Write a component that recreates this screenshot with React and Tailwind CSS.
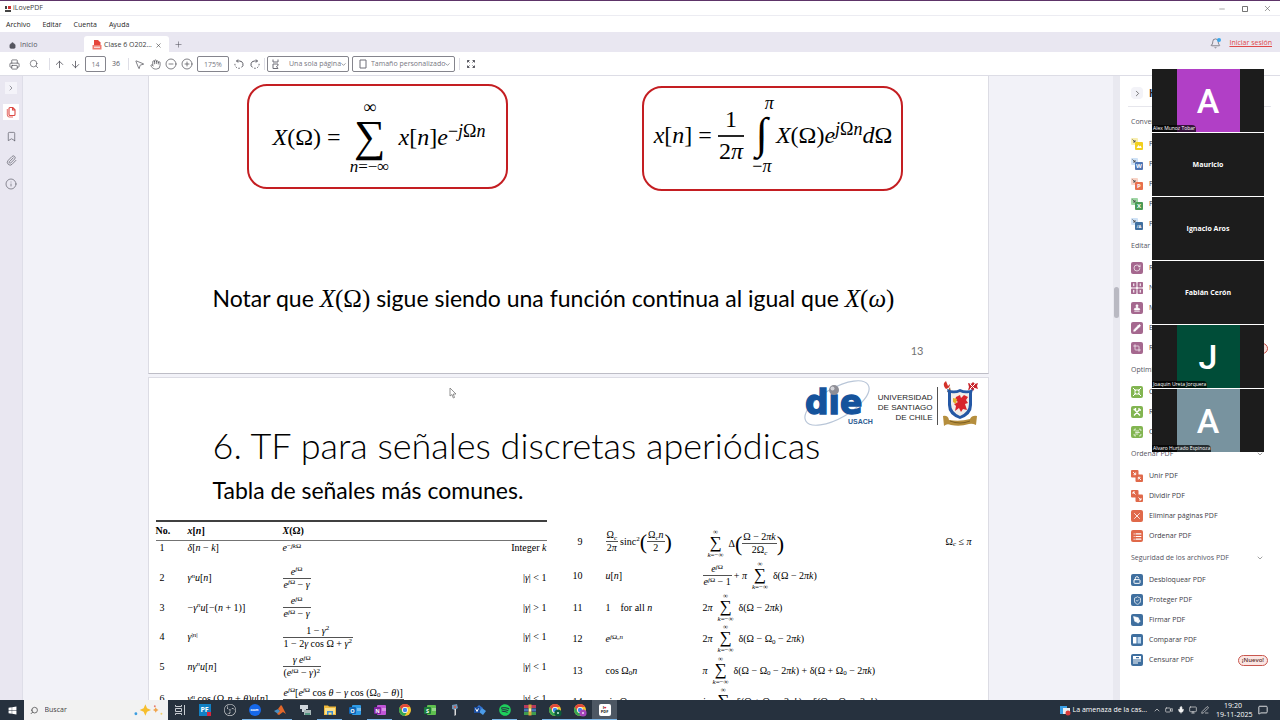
import React from "react";
import {
  Printer, Search, ArrowUp, ArrowDown, MousePointer2, Hand, CircleMinus, CirclePlus,
  RotateCw, ChevronRight, ChevronDown, ChevronUp, Bookmark, Paperclip, Info,
  Bell, X, Minus, Plus, Stamp, Pencil, Crop,
  ScanText, List, LockOpen, ShieldCheck, PenTool,
  Video, Mic, Monitor, PenLine, MessageSquare, Home,
} from "lucide-react";
import { FaWindows, FaSpotify } from "react-icons/fa";
import { SiObsstudio } from "react-icons/si";

/* ---------- math helpers ---------- */
const I = ({ children }) => <i>{children}</i>;
const Sup = ({ children }) => <sup className="text-[7px] leading-none">{children}</sup>;
const Sub = ({ children }) => <sub className="text-[7px] leading-none">{children}</sub>;
const EjO = () => <><I>e</I><Sup><I>j</I>Ω</Sup></>;
const O0 = () => <>Ω<Sub>0</Sub></>;

function Frac({ top, bottom }) {
  return (
    <span className="inline-flex flex-col items-center leading-3">
      <span className="px-px">{top}</span>
      <span className="self-stretch border-t border-neutral-600 px-px text-center">{bottom}</span>
    </span>
  );
}

function SmallSum() {
  return (
    <span className="mx-0.5 inline-flex w-[22px] flex-col items-center">
      <span className="h-1.5 text-[7px] leading-[6px]">∞</span>
      <span className="h-4 text-[17px] leading-4">∑</span>
      <span className="h-2 text-[7px] leading-2 whitespace-nowrap"><I>k</I>=−∞</span>
    </span>
  );
}

const Row = ({ children }) => <span className="inline-flex items-center whitespace-nowrap">{children}</span>;
const Paren = ({ children }) => <span className="text-[22px] leading-6">{children}</span>;
const Abs = ({ op }) => <>|<I>γ</I>| {op} 1</>;

const leftRows = [
  { h: "h-[23px]", pad: "pb-[7px]", n: 1, x: <><I>δ</I>[<I>n</I> − <I>k</I>]</>, f: <><I>e</I><Sup>−<I>jk</I>Ω</Sup></>, c: <>Integer <I>k</I></> },
  { h: "h-[30px]", pad: "", n: 2, x: <><I>γ</I><Sup><I>n</I></Sup><I>u</I>[<I>n</I>]</>, f: <Frac top={<EjO />} bottom={<><EjO /> − <I>γ</I></>} />, c: <Abs op="<" /> },
  { h: "h-[29px]", pad: "", n: 3, x: <>−<I>γ</I><Sup><I>n</I></Sup><I>u</I>[−(<I>n</I> + 1)]</>, f: <Frac top={<EjO />} bottom={<><EjO /> − <I>γ</I></>} />, c: <Abs op=">" /> },
  { h: "h-[30px]", pad: "", n: 4, x: <><I>γ</I><Sup>|<I>n</I>|</Sup></>, f: <Frac top={<>1 − <I>γ</I><Sup>2</Sup></>} bottom={<>1 − 2<I>γ</I> cos Ω + <I>γ</I><Sup>2</Sup></>} />, c: <Abs op="<" /> },
  { h: "h-[29px]", pad: "", n: 5, x: <><I>nγ</I><Sup><I>n</I></Sup><I>u</I>[<I>n</I>]</>, f: <Frac top={<><I>γ</I> <EjO /></>} bottom={<>(<EjO /> − <I>γ</I>)<Sup>2</Sup></>} />, c: <Abs op="<" /> },
  { h: "h-[36px]", pad: "", n: 6, x: <><I>γ</I><Sup><I>n</I></Sup> cos (<O0 /><I>n</I> + <I>θ</I>)<I>u</I>[<I>n</I>]</>, f: <Frac top={<><EjO />[<EjO /> cos <I>θ</I> − <I>γ</I> cos (<O0 /> − <I>θ</I>)]</>} bottom={<><I>e</I><Sup><I>j</I>2Ω</Sup> − (2<I>γ</I> cos <O0 />)<EjO /> + <I>γ</I><Sup>2</Sup></>} />, c: <Abs op="<" /> },
];

const rightRows = [
  { h: "h-[35px]", n: 9, x: <Row><Frac top={<>Ω<Sub><I>c</I></Sub></>} bottom={<>2<I>π</I></>} /><span className="ml-0.5">sinc<Sup>2</Sup></span><Paren>(</Paren><Frac top={<>Ω<Sub><I>c</I></Sub><I>n</I></>} bottom="2" /><Paren>)</Paren></Row>, f: <Row><SmallSum />Δ<Paren>(</Paren><Frac top={<>Ω − 2<I>πk</I></>} bottom={<>2Ω<Sub><I>c</I></Sub></>} /><Paren>)</Paren></Row>, c: <>Ω<Sub><I>c</I></Sub> ≤ <I>π</I></> },
  { h: "h-[33px]", n: 10, x: <><I>u</I>[<I>n</I>]</>, f: <Row><Frac top={<EjO />} bottom={<><EjO /> − 1</>} /><span className="ml-0.5">+ <I>π</I></span><SmallSum />δ(Ω − 2<I>πk</I>)</Row> },
  { h: "h-[31px]", n: 11, x: <>1 &nbsp;&nbsp; for all <I>n</I></>, f: <Row>2<I>π</I><SmallSum />δ(Ω − 2<I>πk</I>)</Row> },
  { h: "h-[32px]", n: 12, x: <><I>e</I><Sup><I>j</I>Ω₀<I>n</I></Sup></>, f: <Row>2<I>π</I><SmallSum /><span>δ(Ω − <O0 /> − 2<I>πk</I>)</span></Row> },
  { h: "h-[31px]", n: 13, x: <>cos <O0 /><I>n</I></>, f: <Row><I>π</I><SmallSum /><span>δ(Ω − <O0 /> − 2<I>πk</I>) + δ(Ω + <O0 /> − 2<I>πk</I>)</span></Row> },
  { h: "h-[32px]", n: 14, x: <>sin <O0 /><I>n</I></>, f: <Row><I>jπ</I><SmallSum /><span>δ(Ω + <O0 /> − 2<I>πk</I>) − δ(Ω − <O0 /> − 2<I>πk</I>)</span></Row> },
];

/* ---------- document ---------- */
function DieLogo() {
  return (
    <svg viewBox="0 0 72 48" className="h-12 w-[72px]" role="img" aria-label="die USACH">
      <ellipse cx="33" cy="23" rx="36" ry="15" transform="rotate(-30 33 23)" fill="none" stroke="#b9c6d8" strokeWidth="1.2" />
      <text x="1" y="34" fontFamily="DejaVu Sans" fontWeight="700" fontSize="33" fill="#15539c" stroke="#15539c" strokeWidth="1.4">dıe</text>
      <circle cx="30" cy="10" r="5" fill="#8e8e96" />
      <circle cx="28.500" cy="8.500" r="2" fill="#d5d5da" />
      <text x="44" y="44" fontFamily="Liberation Sans" fontWeight="700" fontSize="7" fill="#2c5c92">USACH</text>
    </svg>
  );
}

function Crest() {
  return (
    <svg viewBox="0 0 38 48" className="h-12 w-[38px]" role="img" aria-label="Escudo">
      <path d="M5 12 L8 7 L9 12Z" fill="#8a5a2c" />
      <path d="M2 3 Q1 6 4 9 Q8 8 8 4 L6 6 L4 1Z" fill="#d4322a" />
      <path d="M26 3l3 1 2-2 2 2 3-1-1 3 1 3-3-1-2 3-2-2-3 1 1-3z" fill="#c9252c" />
      <path d="M28 4l5 5M33 4l-5 5" stroke="#fff" strokeWidth="1" />
      <path d="M5 9 Q12 12 18 9 Q25 12 31 9 L30 13 V25 Q30 35 18 39 Q6 35 6 25 V13Z" fill="#2458a5" />
      <path d="M9 13 Q14 14 18 12 Q22 14 27 13 V24 Q27 32 18 36 Q9 32 9 24Z" fill="#f1ede9" />
      <path d="M14 17l4-2 1 3 3-3 4 2-2 3 2 3-3 1 2 6-4-1-2 3-2-4-4 3 1-5-2-2 4-2-3-2z" fill="#d8242c" />
      <path d="M11 18l4 1-1 5-3-2z" fill="#e3b02c" />
      <path d="M1 36 Q6 35 7 40 Q18 42 28 39 Q30 35 35 36 L34 45 Q30 43 27 44 Q18 47 9 45 Q5 43 2 46Z" fill="#b58e3d" />
      <path d="M8 41 Q18 45 28 41" fill="none" stroke="#7d5f22" strokeWidth="1" />
    </svg>
  );
}

const boxCls = "flex items-center justify-center rounded-[20px] border-2 border-[#c41e22] text-[24px] leading-7 whitespace-nowrap";

function FirstPage() {
  return (
    <section className="mx-auto h-[298px] w-[841px] shrink-0 border-x border-b border-x-[#dcdce4] border-b-[#bdbdc6] bg-white">
      <div className="flex justify-between pt-2 pr-[85px] pl-[98px] font-['Liberation_Serif',serif]">
        <div className={`${boxCls} h-[105px] w-[261px] pl-1`}>
          <span><I>X</I>(Ω) =</span>
          <span className="mx-1 flex w-[50px] flex-col items-center">
            <span className="h-4 text-[18px] leading-4">∞</span>
            <span className="h-[44px] text-[44px] leading-[44px]">∑</span>
            <span className="h-4 text-[17px] leading-4"><I>n</I>=−∞</span>
          </span>
          <span><I>x</I>[<I>n</I>]<I>e</I></span>
          <span className="pb-3 text-[18px]">−<I>j</I>Ω<I>n</I></span>
        </div>
        <div className={`${boxCls} mt-0.5 h-[105px] w-[261px] pb-2 pl-0.5`}>
          <span><I>x</I>[<I>n</I>] =</span>
          <span className="mx-1.5 flex w-[26px] flex-col items-center">
            <span className="h-[30px]">1</span>
            <span className="h-[30px] self-stretch border-t-2 border-neutral-800 text-center">2<I>π</I></span>
          </span>
          <span className="flex w-6 flex-col items-center">
            <span className="h-4 self-end text-[18px] leading-[14px]"><I>π</I></span>
            <span className="h-[46px] text-[44px] leading-[44px]">∫</span>
            <span className="h-4 text-[18px] leading-4">−<I>π</I></span>
          </span>
          <span className="ml-0.5"><I>X</I>(Ω)<I>e</I></span>
          <span className="pb-3 text-[18px]"><I>j</I>Ω<I>n</I></span>
          <span><I>d</I>Ω</span>
        </div>
      </div>
      <p className="mt-[91px] pl-16 text-[23px] leading-8 whitespace-nowrap">
        Notar que <span className="font-['Liberation_Serif',serif] text-[25px]"><I>X</I>(Ω)</span> sigue siendo una función continua al igual que{" "}
        <span className="font-['Liberation_Serif',serif] text-[25px]"><I>X</I>(<I>ω</I>)</span>
      </p>
      <p className="mt-7 pr-16 text-right text-[11px] leading-4 text-neutral-500">13</p>
    </section>
  );
}

function SecondPage() {
  return (
    <section className="mx-auto mt-[3px] w-[841px] shrink-0 border-x border-t border-[#dcdce4] bg-white">
      <header className="flex h-[52px] items-center justify-end pr-2">
        <DieLogo />
        <p className="mr-1 ml-0.5 w-[55px] pt-2 text-right font-['Liberation_Sans',sans-serif] text-[8px] leading-[10px] whitespace-nowrap text-neutral-800">
          UNIVERSIDAD<br />DE SANTIAGO<br />DE CHILE
        </p>
        <div className="mt-1 mr-1 h-[38px] w-px bg-neutral-600" />
        <Crest />
      </header>
      <h1 className="-mt-1 pl-16 text-[36px] leading-[38px] font-light whitespace-nowrap text-black">6. TF para señales discretas aperiódicas</h1>
      <p className="mt-2.5 pl-16 text-[23px] leading-8 whitespace-nowrap">Tabla de señales más comunes.</p>
      <div className="mt-3.5 flex items-start justify-between pr-4 pl-[7px] font-['Liberation_Serif',serif] text-[10px] leading-3">
        <table className="w-[391px] border-t-2 border-neutral-700">
          <thead>
            <tr className="h-[19px] border-b border-neutral-500 text-left">
              <th className="w-8 p-0">No.</th>
              <th className="w-[95px] p-0"><I>x</I>[<I>n</I>]</th>
              <th className="p-0"><I>X</I>(Ω)</th>
              <th className="w-16 p-0" aria-label="Condición" />
            </tr>
          </thead>
          <tbody>
            {leftRows.map((r) => (
              <tr key={r.n} className={r.h}>
                <td className={`p-0 pl-1 ${r.pad}`}>{r.n}</td>
                <td className={`p-0 whitespace-nowrap ${r.pad}`}>{r.x}</td>
                <td className={`p-0 whitespace-nowrap ${r.pad}`}>{r.f}</td>
                <td className={`p-0 text-right whitespace-nowrap ${r.pad}`}>{r.c}</td>
              </tr>
            ))}
          </tbody>
        </table>
        <table className="mt-1 w-[400px]">
          <tbody>
            {rightRows.map((r) => (
              <tr key={r.n} className={r.h}>
                <td className="w-[34px] p-0 pr-[23px] text-right">{r.n}</td>
                <td className="w-[97px] p-0 whitespace-nowrap">{r.x}</td>
                <td className="p-0 whitespace-nowrap">{r.f}</td>
                <td className="w-8 p-0 text-right whitespace-nowrap">{r.c}</td>
              </tr>
            ))}
          </tbody>
        </table>
      </div>
    </section>
  );
}

/* ---------- tools panel ---------- */
const Tile = ({ color, children }) => (
  <span className={`flex size-3 shrink-0 items-center justify-center rounded-[2px] text-white ${color}`}>{children}</span>
);

function Convert({ color, pale, mark }) {
  return (
    <svg viewBox="0 0 12 12" className="size-3 shrink-0" aria-hidden="true">
      <rect width="7" height="7" rx="1" className={pale} />
      <path d="M1.500 1.500l2.500 2.500M4 2v2H2" stroke="#444" strokeWidth=".8" fill="none" />
      <rect x="4" y="4" width="8" height="8" rx="1" className={color} />
      {mark === "img" ? <path d="M5.500 10l2-3 1.200 1.500 1-1 1 2.500z" fill="#fff" /> : (
        <text x="8" y="10.200" textAnchor="middle" fontSize={mark.length > 1 ? 4 : 6} fontWeight="700" fontFamily="Open Sans" fill="#fff">{mark}</text>
      )}
    </svg>
  );
}

function Pair({ out }) {
  return (
    <svg viewBox="0 0 12 12" className="size-3 shrink-0" aria-hidden="true">
      <rect width="7.500" height="7.500" rx="1" fill="#e0694a" />
      <rect x="4.500" y="4.500" width="7.500" height="7.500" rx="1" fill="#e0694a" />
      <path d={out ? "M4.500 4.500L2 2M2 4V2h2M7.500 7.500L10 10M10 8v2H8" : "M2 2l2.500 2.500M4.700 2.500v2.200H2.500M10 10L7.500 7.500M7.300 9.500V7.300h2.200"} stroke="#fff" strokeWidth=".9" fill="none" />
    </svg>
  );
}

function Numbers() {
  return (
    <svg viewBox="0 0 12 12" className="size-3 shrink-0" aria-hidden="true">
      {[[0, 0], [6.5, 0], [0, 6.5], [6.5, 6.5]].map(([x, y]) => (
        <g key={`${x}-${y}`}>
          <rect x={x} y={y} width="5.500" height="5.500" rx=".8" fill="#a5688f" />
          <rect x={x + 2.2} y={y + 1.4} width="1.100" height="2.700" fill="#fff" />
        </g>
      ))}
    </svg>
  );
}

const P = "bg-[#a5688f]", G = "bg-[#82b551]", R = "bg-[#e0694a]", B = "bg-[#3f6f9f]";
const groups = [
  { title: "Convertir PDF", items: [
    ["PDF a JPG", <Convert color="fill-[#f2cf1d]" pale="fill-[#f8eeb0]" mark="img" />],
    ["PDF a Word", <Convert color="fill-[#4f75b4]" pale="fill-[#cfe2f6]" mark="W" />],
    ["PDF a Powerpoint", <Convert color="fill-[#e8704c]" pale="fill-[#f8d3c6]" mark="P" />],
    ["PDF a Excel", <Convert color="fill-[#4b9a55]" pale="fill-[#9fd6a4]" mark="X" />],
    ["PDF a PDF/A", <Convert color="fill-[#3f6f9f]" pale="fill-[#cfe2f6]" mark="/A" />],
  ] },
  { title: "Editar PDF", items: [
    ["Rotar PDF", <Tile color={P}><RotateCw size={8} /></Tile>],
    ["Números de página", <Numbers />],
    ["Marca de agua", <Tile color={P}><Stamp size={8} fill="white" /></Tile>],
    ["Editar PDF", <Tile color={P}><Pencil size={8} fill="white" /></Tile>],
    ["Recortar PDF", <Tile color={P}><Crop size={8} /></Tile>, true],
  ] },
  { title: "Optimizar PDF", items: [
    ["Comprimir PDF", <Tile color={G}><svg viewBox="0 0 12 12" className="size-3" fill="none" stroke="currentColor"><path d="M2 2l3 3M5 3v2H3M10 2L7 5M7 3v2h2M2 10l3-3M3 7h2v2M10 10L7 7M9 7H7v2" /></svg></Tile>],
    ["Reparar PDF", <Tile color={G}><svg viewBox="0 0 12 12" className="size-3" fill="none" stroke="currentColor" strokeWidth="1.300"><path d="M3 9.500L8.500 3.500M3.500 3.500l5.500 6M2.500 3.500h2v-1.500M8 2v2h2" /></svg></Tile>],
    ["OCR PDF", <Tile color={G}><ScanText size={9} /></Tile>],
  ] },
  { title: "Ordenar PDF", items: [
    ["Unir PDF", <Pair />],
    ["Dividir PDF", <Pair out />],
    ["Eliminar páginas PDF", <Tile color={R}><X size={10} /></Tile>],
    ["Ordenar PDF", <Tile color={R}><List size={9} strokeWidth={3} /></Tile>],
  ] },
  { title: "Seguridad de los archivos PDF", items: [
    ["Desbloquear PDF", <Tile color={B}><LockOpen size={8} strokeWidth={3} /></Tile>],
    ["Proteger PDF", <Tile color={B}><ShieldCheck size={9} /></Tile>],
    ["Firmar PDF", <Tile color={B}><PenTool size={8} fill="white" /></Tile>],
    ["Comparar PDF", <Tile color={B}><svg viewBox="0 0 12 12" className="size-3"><path d="M2 3h3.500v6.500H2z" fill="#fff" /><path d="M6.500 3H10v6.500H6.500z" fill="#b7d4ee" /></svg></Tile>],
    ["Censurar PDF", <Tile color={B}><svg viewBox="0 0 12 12" className="size-3" fill="#fff"><path d="M2 2h8v3.500H2zM2 6.500h8v1H2zM2 8.500h5v1H2z" /><path d="M5 3h3v1.200H5z" fill="#3f6f9f" /></svg></Tile>, true],
  ] },
];

function ToolsPanel() {
  return (
    <aside className="w-[160px] shrink-0 bg-white text-[7px] text-[#3c3c46]">
      <div className="mr-[9px] mb-[3px] ml-2 flex h-[31px] items-center gap-1.5 border-b border-[#e6e6ec] pt-1">
        <button aria-label="Contraer panel" className="ml-[3px] flex size-3 items-center justify-center rounded-sm bg-[#f3f3f8] text-neutral-600"><ChevronRight size={9} /></button>
        <h2 className="text-[10px] font-bold text-neutral-800">Herramientas</h2>
      </div>
      {groups.map((g) => (
        <section key={g.title} className="pr-3 pl-[11px]">
          <h3 className="flex h-6 items-center justify-between pr-1 whitespace-nowrap text-[#55555f]">{g.title}<ChevronDown size={8} className="text-neutral-500" /></h3>
          <ul>
            {g.items.map(([name, icon, isNew]) => (
              <li key={name}>
                <button className="flex h-5 w-full items-center gap-1.5 text-left whitespace-nowrap">
                  {icon}
                  <span className="grow">{name}</span>
                  {isNew && <span className="rounded-md border border-[#c9574f] bg-[#fbe6e3] px-[3px] text-[6px] leading-[9px] font-semibold text-[#5b2f2c]">¡Nuevo!</span>}
                </button>
              </li>
            ))}
          </ul>
        </section>
      ))}
    </aside>
  );
}

/* ---------- meeting strip ---------- */
const people = [
  { name: "Alex Munoz Tobar", letter: "A", color: "bg-[#b13fc6]" },
  { name: "Mauricio" },
  { name: "Ignacio Aros" },
  { name: "Fabián Cerón" },
  { name: "Joaquin Ureta Jorquera", letter: "J", color: "bg-[#004d38]" },
  { name: "Alvaro Hurtado Espinoza", letter: "A", color: "bg-[#78939f]" },
];

function Meeting() {
  return (
    <div className="absolute top-[68px] right-4 flex w-28 flex-col gap-px bg-white">
      {people.map((p) => (
        <div key={p.name} className="relative flex h-[63px] items-center justify-center bg-[#1c1c1c] text-white">
          {p.letter ? (
            <>
              <div className={`flex h-full w-[63px] items-center justify-center pt-0.5 font-[Roboto,sans-serif] text-[34px] font-medium ${p.color}`}>{p.letter}</div>
              <span className="absolute bottom-0 left-0 rounded-tr-sm bg-black/70 px-px text-[5px] leading-[7px]">{p.name}</span>
            </>
          ) : (
            <span className="pt-px text-[7px] font-bold">{p.name}</span>
          )}
        </div>
      ))}
    </div>
  );
}

/* ---------- taskbar ---------- */
const Chrome = ({ badge, dot }) => (
  <svg viewBox="0 0 14 14" className="size-3.5">
    <circle cx="7" cy="7" r="6" fill="#f7c62f" />
    <path d="M1.800 4A6 6 0 0 1 12.200 4H7a3 3 0 0 0-2.600 4.500z" fill="#e2493b" />
    <path d="M1.800 4A6 6 0 0 0 6.500 13L9.600 8.500A3 3 0 0 1 4.400 8.500z" fill="#36a655" />
    <circle cx="7" cy="7" r="2.900" fill="#fff" /><circle cx="7" cy="7" r="2.200" fill="#4285f4" />
    {badge && <><circle cx="10" cy="10" r="3.600" fill={badge} /><circle cx="10" cy="10" r="1" fill={dot} /></>}
  </svg>
);
const Office = ({ color, dark, letter }) => (
  <svg viewBox="0 0 14 14" className="size-3.5">
    <rect x="4" y="2" width="9" height="10" rx="1" fill={color} />
    <path d="M9 5h4v3H9z" fill="#fff" opacity=".35" />
    <rect x="1" y="4" width="7" height="7" rx="1" fill={dark} />
    <text x="4.500" y="9.500" textAnchor="middle" fontSize="5.500" fontWeight="700" fontFamily="Open Sans" fill="#fff">{letter}</text>
  </svg>
);

const apps = [
  ["Vista de tareas", <svg viewBox="0 0 14 14" className="size-3.5" fill="none" stroke="#c8ccd2"><path d="M2.500 2v1.500h6V2M2.500 12v-1.500h6V12M2.500 5.500h6v3h-6zM11.500 2v10" /></svg>],
  ["PF", <span className="relative flex size-3 items-center justify-center bg-[#1180c4] text-[7px] font-bold text-white">PF<span className="absolute right-0 bottom-0 size-1 bg-[#d7263d]" /></span>],
  ["OBS", <SiObsstudio size={12} className="text-neutral-200" />],
  ["Zoom", <span className="flex size-3 items-center justify-center rounded-full bg-[#1668ea] text-[3px] font-bold text-white">zoom</span>, true],
  ["MATLAB", <svg viewBox="0 0 14 14" className="size-3.5"><path d="M1 8l4-2 3 3-3 2z" fill="#4a8ec2" /><path d="M5 6l3-4 1 1 4 8-3-2-4 3-2-1 3-3z" fill="#e2672a" /></svg>, true],
  ["Escáner", <svg viewBox="0 0 14 14" className="size-3.5"><path d="M2 2h8v4H2zM4 6h4v3H4z" fill="#cfd6dc" /><path d="M6 7h7v5H6z" fill="#a8b7b7" /><path d="M7 10h5v2H7z" fill="#5b9b87" /></svg>],
  ["Explorador", <svg viewBox="0 0 14 14" className="size-3.5"><path d="M1 2.500h4l1 1h7V12H1z" fill="#f0b93b" /><path d="M2 5h10v6H2z" fill="#fbe08a" /><path d="M4 8h6v4H8.500V9.500h-3V12H4z" fill="#3f8dd0" /></svg>, true],
  ["Outlook", <Office color="#2f9be6" dark="#0f65b5" letter="O" />],
  ["OneNote", <Office color="#c056d8" dark="#8124a3" letter="N" />, true],
  ["Chrome", <Chrome />],
  ["Project", <Office color="#5fc04f" dark="#1c7a3b" letter="S" />],
  ["Lápiz", <svg viewBox="0 0 14 14" className="size-3.5"><path d="M4 2l5-1 1 4-3 2-3-1z" fill="#6f93b3" /><path d="M6.500 6l1.500 0v6l-1.500 1z" fill="#dcdcdc" /><circle cx="7" cy="4" r="1" fill="#e5533c" /></svg>],
  ["Visio", <svg viewBox="0 0 14 14" className="size-3.5"><path d="M6 2l4 3-4 3-3-3z" fill="#2f6fd0" /><path d="M9 5l4 3-3 4-4-3z" fill="#4b9be8" /><path d="M1 4h6v6H1z" fill="#1d4f9f" /><path d="M2.500 5.500L4 8.500l1.500-3" stroke="#fff" fill="none" /></svg>],
  ["Spotify", <FaSpotify size={12} className="text-[#1ed05c]" />, true],
  ["WinRAR", <svg viewBox="0 0 14 14" className="size-3.5"><path d="M1 2h12v3H1z" fill="#b83a5c" /><path d="M1 5.500h12v3H1z" fill="#4574b8" /><path d="M1 9h12v3H1z" fill="#3f9b4f" /><path d="M5.500 1.500h3v11h-3z" fill="#d8a53a" /><path d="M6 5.500h2v3H6z" fill="#fff1b8" /></svg>],
  ["Chrome trabajo", <Chrome badge="#0c5b3c" dot="#cdeedd" />, true],
  ["Chrome personal", <Chrome badge="#a545bb" dot="#f1d7f6" />, true],
  ["iLovePDF", <span className="flex size-3 flex-col items-center justify-center rounded-[2px] bg-white text-[4px] leading-[4px] font-bold text-neutral-900"><span>I<span className="text-red-600">♥</span></span><span>PDF</span></span>, true, true],
];

function Taskbar() {
  return (
    <footer className="flex h-5 shrink-0 items-stretch bg-[#26313e] text-[7px] text-white">
      <button aria-label="Inicio" className="flex w-6 items-center justify-center"><FaWindows size={9} /></button>
      <label className="flex w-36 items-center gap-1.5 bg-[#f2f2f2] pl-1.5 text-neutral-700">
        <Search size={9} className="-scale-x-100" />
        <input aria-label="Buscar" placeholder="Buscar" className="min-w-0 grow bg-transparent text-[7px] outline-none placeholder:text-neutral-700" />
        <svg viewBox="0 0 32 16" className="mr-1 h-4 w-8">
          <path d="M12 2l1.800 4.200L18 8l-4.200 1.800L12 14l-1.800-4.200L6 8l4.200-1.800z" fill="#f6be2c" />
          <path d="M23 5l1 2 2 1-2 1-1 2-1-2-2-1 2-1z" fill="#f0a44c" />
          <circle cx="2" cy="12" r="1.500" fill="#3b9de0" /><circle cx="22" cy="4" r="1" fill="#e87b6c" /><circle cx="29" cy="12" r="1" fill="#f2cf6b" />
        </svg>
      </label>
      <nav className="-ml-px flex">
        {apps.map(([name, icon, open, active]) => (
          <button key={name} aria-label={name} className={`flex w-[25px] flex-col items-center border-b pt-[3px] ${active ? "border-[#7db8ea] bg-[#4d5763]" : open ? "border-[#7db8ea]" : "border-transparent"}`}>
            <span className="flex size-3.5 items-center justify-center">{icon}</span>
          </button>
        ))}
      </nav>
      <div className="ml-auto flex items-center">
        <svg viewBox="0 0 12 12" className="mr-0.5 size-3"><path d="M1 2h7v8H1z" fill="#3aa0e8" /><path d="M4 4h7v6H4z" fill="#e8eef4" /><circle cx="9" cy="9" r="2.500" fill="#d93b3b" /></svg>
        <span className="mr-1.5 whitespace-nowrap">La amenaza de la cas...</span>
        <div className="flex items-center gap-1 text-neutral-200">
          <ChevronUp size={8} /><Video size={8} /><Mic size={8} fill="white" /><Monitor size={8} /><PenLine size={8} />
        </div>
        <time className="mr-2 ml-[7px] w-[34px] text-center leading-[9px] whitespace-nowrap">19:20<br />19-11-2025</time>
        <MessageSquare size={10} className="mr-3" />
      </div>
    </footer>
  );
}

/* ---------- window chrome ---------- */
const iconBtn = "flex size-4 items-center justify-center text-[#4a4a52]";
const Divider = () => <span className="h-3 w-px bg-[#dedee6]" />;

const RotateGlyph = ({ flip }) => (
  <svg viewBox="0 0 12 12" className={flip ? "size-3 -scale-x-100" : "size-3"} fill="none" stroke="currentColor" strokeWidth=".9">
    <path d="M5 1.500L3.500 3 5 4.500M3.700 3H6.500A3.500 3.500 0 0 1 8.500 9.400" />
    <path d="M6.800 10.200A4 4 0 0 1 2 5.500" strokeDasharray="1.500 1.500" />
  </svg>
);

function Toolbar() {
  return (
    <div className="flex h-6 shrink-0 items-center border-b border-[#dddde6] pt-px pl-1.5 text-[7px] text-[#55555f]">
      <button aria-label="Imprimir" className={iconBtn}><Printer size={11} strokeWidth={1.5} /></button>
      <button aria-label="Buscar" className={`${iconBtn} mx-1`}><Search size={10} strokeWidth={1.5} /></button>
      <span className="w-[3px]" /><Divider />
      <button aria-label="Página anterior" className={`${iconBtn} ml-px`}><ArrowUp size={11} strokeWidth={1.7} /></button>
      <button aria-label="Página siguiente" className={iconBtn}><ArrowDown size={11} strokeWidth={1.7} /></button>
      <input aria-label="Página" defaultValue="14" className="ml-0.5 h-4 w-[21px] rounded-[2px] border border-[#85858d] text-center text-[#77777f]" />
      <span className="mr-[5px] ml-[3px] w-[14px] text-center">36</span><Divider />
      <button aria-label="Seleccionar" className={`${iconBtn} ml-0.5`}><MousePointer2 size={11} strokeWidth={1.5} /></button>
      <button aria-label="Mano" className={iconBtn}><Hand size={11} strokeWidth={1.5} /></button>
      <button aria-label="Alejar" className={iconBtn}><CircleMinus size={12} strokeWidth={1.4} /></button>
      <button aria-label="Acercar" className={iconBtn}><CirclePlus size={12} strokeWidth={1.4} /></button>
      <input aria-label="Zoom" defaultValue="175%" className="mx-0.5 h-4 w-8 rounded-[2px] border border-[#85858d] text-center text-[#77777f]" />
      <button aria-label="Girar a la izquierda" className={iconBtn}><RotateGlyph /></button>
      <button aria-label="Girar a la derecha" className={iconBtn}><RotateGlyph flip /></button>
      <span className="w-px" /><Divider />
      <span className="relative ml-0.5 flex items-center">
        <svg viewBox="0 0 10 10" className="absolute left-1 size-2.5" fill="none" stroke="#6f6f78"><path d="M2 .5v2.500h5V.5M2 9.500V5h5v1.500L5.500 7.500 7 9.500z" /></svg>
        <select aria-label="Modo de página" className="h-4 w-[82px] appearance-none rounded-[2px] border border-[#85858d] pl-[21px] text-[#77777f]"><option>Una sola página</option></select>
        <ChevronDown size={7} className="absolute right-0.5" />
      </span>
      <span className="relative mr-1 ml-[3px] flex items-center">
        <svg viewBox="0 0 10 10" className="absolute left-1.5 size-2.5" fill="none" stroke="#6f6f78"><path d="M2 1h6v8H2z" /></svg>
        <select aria-label="Tamaño" className="h-4 w-[103px] appearance-none rounded-[2px] border border-[#85858d] pl-[18px] text-[#77777f]"><option>Tamaño personalizado</option></select>
        <ChevronDown size={7} className="absolute right-1" />
      </span>
      <Divider />
      <button aria-label="Pantalla completa" className={`${iconBtn} ml-[3px]`}>
        <svg viewBox="0 0 10 10" className="size-2.5" fill="none" stroke="currentColor" strokeWidth=".9"><path d="M1.500 3.500v-2h2M1.500 1.500l2 2M8.500 3.500v-2h-2M8.500 1.500l-2 2M1.500 6.500v2h2M1.500 8.500l2-2M8.500 6.500v2h-2M8.500 8.500l-2-2" /></svg>
      </button>
    </div>
  );
}

export default function App() {
  return (
    <div className="relative flex h-screen flex-col overflow-hidden border-t border-[#5d3468] bg-white font-['Open_Sans','Noto_Sans',sans-serif] text-black">
      <div className="flex h-[15px] shrink-0 items-center border-b border-[#ececf2] pt-px pl-[5px] text-[7px] text-neutral-700">
        <svg viewBox="0 0 6 6" className="mr-0.5 size-1.5"><path d="M0 0h2v3H0zM0 4h6v2H0z" fill="#444" /><path d="M3 0h3v3H3z" fill="#c33" /></svg>
        iLovePDF
        <div className="ml-auto flex items-center pr-px text-neutral-600">
          <button aria-label="Minimizar" className="flex w-[23px] justify-center"><Minus size={8} strokeWidth={1.5} /></button>
          <button aria-label="Maximizar" className="flex w-[23px] justify-center">
            <svg viewBox="0 0 8 8" className="size-2" fill="none" stroke="currentColor" strokeWidth=".8"><path d="M1.500 1.500h5v5h-5z" /></svg>
          </button>
          <button aria-label="Cerrar" className="flex w-[23px] justify-center"><X size={9} strokeWidth={1.5} /></button>
        </div>
      </div>
      <nav className="flex h-4 shrink-0 items-center gap-3 pt-0.5 pl-1.5 text-[7px] text-neutral-800">
        <button>Archivo</button><button>Editar</button><button>Cuenta</button><button>Ayuda</button>
      </nav>
      <div className="flex h-5 shrink-0 items-end bg-[#e9e7f1] text-[7px] text-[#55555f]">
        <button className="flex h-4 w-[84px] items-center gap-1 pt-0.5 pl-[9px]"><Home size={7} fill="currentColor" />Inicio</button>
        <div className="flex h-4 w-[85px] items-center rounded-t-[3px] bg-white pt-0.5 pl-2 text-neutral-700">
          <svg viewBox="0 0 10 10" className="mr-0.5 size-2.5"><path d="M2 0h4l2.500 2.500V5H2z" fill="#e5453c" /><path d="M.5 5h9v4.500h-9z" fill="#ee7a70" /><path d="M2 7.200h6" stroke="#fff" /></svg>
          <span className="grow whitespace-nowrap">Clase 6 O202...</span>
          <button aria-label="Cerrar pestaña" className="mr-[7px]"><X size={7} /></button>
        </div>
        <button aria-label="Nueva pestaña" className="flex h-4 w-[19px] items-center justify-center"><Plus size={9} strokeWidth={1.5} /></button>
        <div className="ml-auto flex h-5 items-center gap-2 pt-0.5 pr-2">
          <span className="relative"><Bell size={11} strokeWidth={1.5} /><span className="absolute top-0 right-0 size-1 rounded-full bg-[#3aa7ea]" /></span>
          <a href="#login" className="text-[#e04848] underline">Iniciar sesión</a>
        </div>
      </div>
      <Toolbar />
      <div className="flex min-h-0 grow overflow-hidden">
        <nav className="flex w-[23px] shrink-0 flex-col items-center gap-2 border-r border-[#dedee8] bg-[#e9e7f1] pt-1 text-[#6a6a74]">
          <button aria-label="Expandir" className="flex size-4 items-center justify-center"><span className="flex size-3 items-center justify-center bg-[#f4f3f9]"><ChevronRight size={8} /></span></button>
          <button aria-label="Páginas" className="flex size-4 items-center justify-center bg-white">
            <svg viewBox="0 0 12 12" className="size-3" fill="none" stroke="#dd4a44" strokeWidth="1.100"><path d="M5 1.500h2.800L10 3.800V8.500A1 1 0 0 1 9 9.500H5A1 1 0 0 1 4 8.500v-6A1 1 0 0 1 5 1.500zM7.500 1.500V4H10" /><path d="M2.300 3v6A2 2 0 0 0 4.300 11H8" strokeWidth=".8" /></svg>
          </button>
          <button aria-label="Marcadores" className="flex size-4 items-center justify-center"><Bookmark size={11} strokeWidth={1.7} /></button>
          <button aria-label="Adjuntos" className="flex size-4 items-center justify-center"><Paperclip size={11} strokeWidth={1.7} /></button>
          <button aria-label="Información" className="flex size-4 items-center justify-center"><Info size={12} strokeWidth={1.5} /></button>
        </nav>
        <main className="relative flex min-w-0 grow flex-col overflow-hidden bg-[#f2f2f8] font-[Lato,sans-serif]">
          <FirstPage />
          <SecondPage />
          <svg viewBox="0 0 8 12" className="absolute top-[311px] left-[426px] h-3 w-2"><path d="M1 1v8l2-1.500L4.300 11l1.200-.5L4.300 7H7z" fill="#fff" stroke="#777" strokeWidth=".8" /></svg>
        </main>
        <div className="w-[7px] shrink-0 bg-[#e9e9f0] pt-[211px]"><div className="ml-px h-[31px] w-[5px] rounded-full bg-[#b9b9c2]" /></div>
        <ToolsPanel />
      </div>
      <Taskbar />
      <Meeting />
    </div>
  );
}
